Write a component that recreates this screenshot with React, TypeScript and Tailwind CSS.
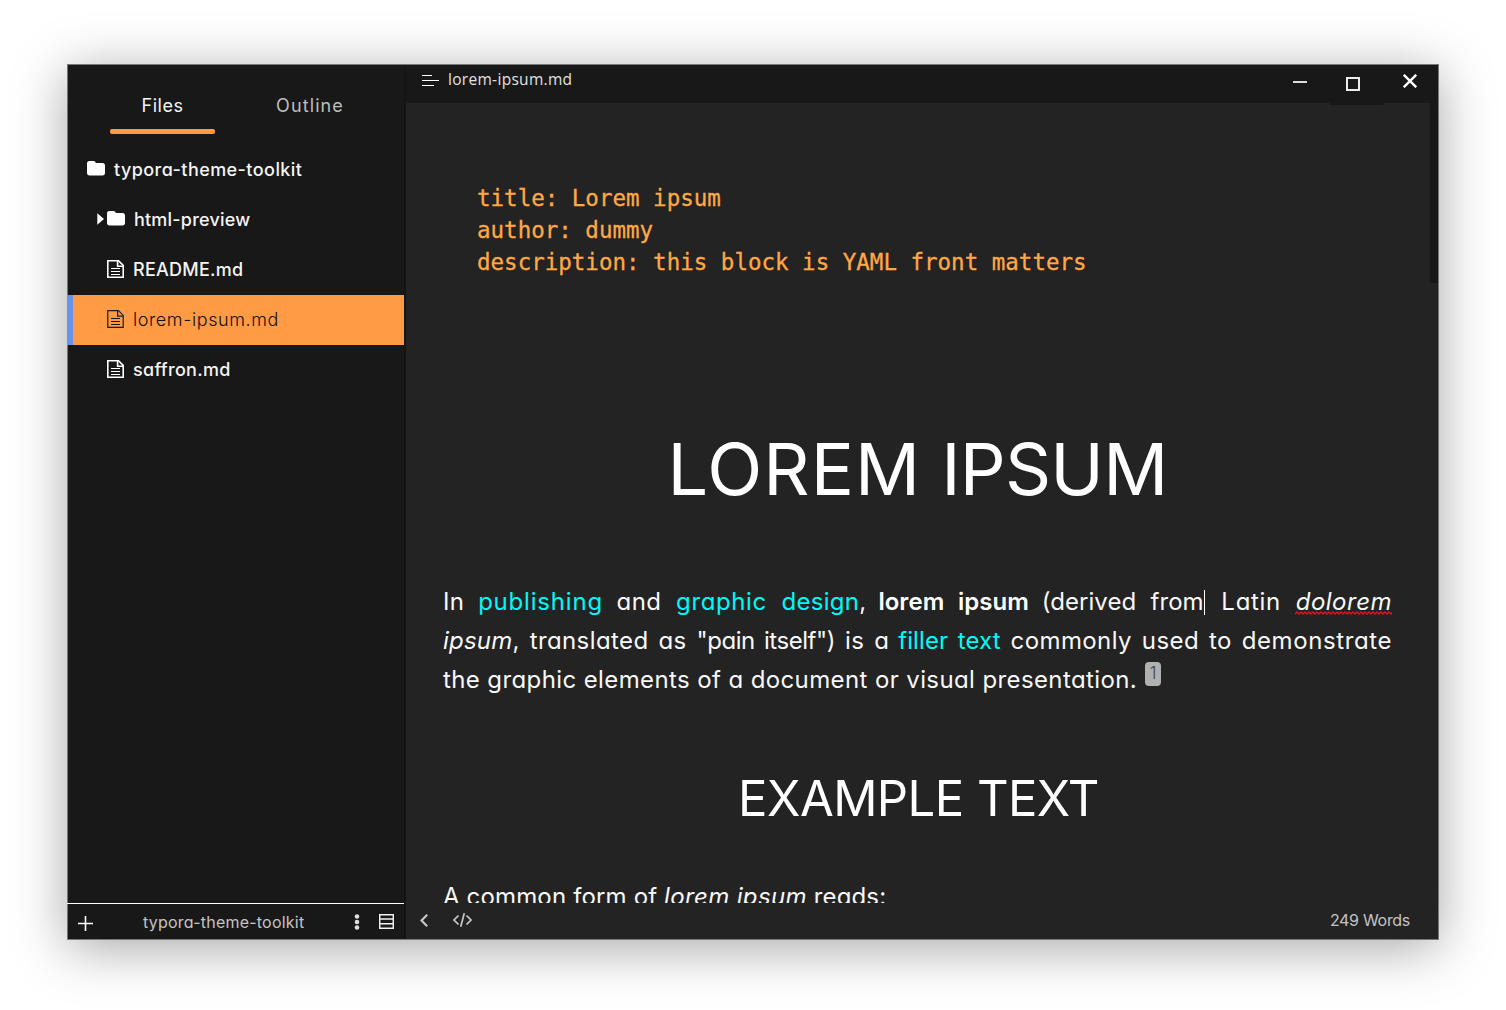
import React from "react";

const Folder = () => (
  <svg className="-mt-[2px] block h-[15px] w-[18px] shrink-0" viewBox="0 0 18 15" fill="#fff">
    <path d="M2.200 0h4.400c1.200 0 2.100.9 2.100 2.100h7c1.300 0 2.300 1 2.300 2.300v7.600c0 1.400-1 2.400-2.300 2.400H2.400C1.100 14.400 0 13.400 0 12V2.200C0 1 1 0 2.200 0z" />
  </svg>
);

const Doc = ({ color, heavy }: { color: string; heavy: boolean }) => (
  <svg className="block h-[18px] w-[17px] shrink-0" viewBox="0 0 17 18" fill="none" stroke={color} strokeWidth={heavy ? 1.6 : 1.2}>
    <path d="M.8.7h10.700l4.700 4.700v11.900H.8z" />
    <path d="M10.600.7v5.500h5.600" />
    <path d="M4 8.500h9M4 11.500h9M4 14.500h9" strokeWidth="1.100" />
  </svg>
);

const Link = ({ children }: { children: React.ReactNode }) => <span className="text-[#00f8f8]">{children}</span>;

function FileRow({ name, spacing, active = false }: { name: string; spacing: string; active?: boolean }) {
  return (
    <div className={active ? "flex h-[50px] w-[337px] -ml-px items-center border-l-[6px] border-[#6c93ea] bg-[#ff9a45] pb-[2px] pl-[34px] font-light text-[#111]" : "flex h-[50px] items-center pb-[2px] pl-[39px] font-medium text-[#f4f4f4]"}>
      <Doc color={active ? "#1c1c1c" : "#fff"} heavy={!active} />
      <span className={"ml-[9px] " + spacing}>{name}</span>
    </div>
  );
}

function Sidebar() {
  return (
    <aside className="flex w-[338px] shrink-0 flex-col border-r-2 border-[#151515] bg-[#181818] text-[18px]">
      <div className="flex h-[80px] shrink-0 items-start pl-[42px]">
        <div className="mt-[25px] flex w-[105px] flex-col items-center text-[#f4f4f4]">
          <span className="h-[39px] leading-[31px] tracking-[0.500px]">Files</span>
          <span className="h-[5px] w-full rounded-[2px] bg-[#ff9a45]" />
        </div>
        <div className="mt-[25px] ml-[42px] w-[106px] text-center leading-[31px] tracking-[1.100px] text-[#bdbdbd]">Outline</div>
      </div>
      <div className="flex h-[50px] items-center pb-[2px] pl-[19px] font-medium text-[#f4f4f4]">
        <Folder />
        <span className="ml-[9px] tracking-[0.440px]">typora-theme-toolkit</span>
      </div>
      <div className="flex h-[50px] items-center pb-[2px] pl-[29px] font-medium text-[#f4f4f4]">
        <svg className="-mt-px mr-[3px] h-[12px] w-[7px]" viewBox="0 0 7 12" fill="#fff"><path d="M.3.300 7 6 .300 11.700z" /></svg>
        <Folder />
        <span className="ml-[9px] tracking-[0.200px]">html-preview</span>
      </div>
      <FileRow name="README.md" spacing="tracking-[0.250px]" />
      <FileRow name="lorem-ipsum.md" spacing="tracking-[0.600px]" active />
      <FileRow name="saffron.md" spacing="tracking-[0.300px]" />
      <div className="mt-auto -ml-px flex h-[36px] w-[337px] items-center border-t border-white text-[16px] text-[#c4c4c4]">
        <svg className="ml-[11px] mt-[4px] h-[15px] w-[15px]" viewBox="0 0 15 15" stroke="#fff" strokeWidth="1.600"><path d="M7.500 0v15M0 7.500h15" /></svg>
        <span className="ml-[50px] w-[162px] whitespace-nowrap tracking-[0.220px]">typora-theme-toolkit</span>
        <svg className="ml-[49px] h-[16px] w-[6px]" viewBox="0 0 6 16" fill="#dedede"><circle cx="3" cy="2.500" r="2.300" /><circle cx="3" cy="8" r="2.300" /><circle cx="3" cy="13.500" r="2.300" /></svg>
        <svg className="ml-[19px] h-[15px] w-[15px]" viewBox="0 0 15 15" fill="none" stroke="#f0f0f0" strokeWidth="1.500"><path d="M.7.700h13.600v13.600H.7zM.7 5h13.600M.7 9.800h13.600" /></svg>
      </div>
    </aside>
  );
}

function TitleBar() {
  return (
    <header className="flex h-[38px] shrink-0 bg-[#181818]">
      <svg className="ml-[16px] mt-[9px] h-[13px] w-[17px]" viewBox="0 0 17 13" stroke="#fff" strokeWidth="1"><path d="M0 1.500h10M0 6.500h17M0 11.500h12" /></svg>
      <span className="ml-[9px] mt-[3px] font-['Open_Sans'] text-[15.500px] font-medium leading-[22px] tracking-[0.300px] text-[#e2e2e2]">lorem-ipsum.md</span>
      <div className="relative ml-auto mr-[21px] flex items-start">
        <span className="mt-[16px] h-[2px] w-[14px] bg-[#dcdcdc]" />
        <span className="absolute left-[37px] top-[38px] h-[2px] w-[53px] bg-[#181818]" />
        <span className="ml-[39px] mt-[12px] h-[14px] w-[14px] border-2 border-[#ececec]" />
        <svg className="ml-[43px] mt-[9px] h-[14px] w-[14px]" viewBox="0 0 14 14" stroke="#fff" strokeWidth="2.400"><path d="M.8.800l12.400 12.400M13.200.800.800 13.200" /></svg>
      </div>
    </header>
  );
}

const line = "whitespace-nowrap [text-align-last:justify]";

export default function App() {
  return (
    <div className="h-[1010px] w-[1506px] overflow-hidden bg-white px-[67px] pt-[64px] font-['Inter',sans-serif] [font-feature-settings:'cv11']">
      <div className="flex h-[876px] w-[1372px] border border-[#777] bg-[#232323] shadow-[0_8px_50px_rgba(0,0,0,0.350)]">
        <Sidebar />
        <div className="flex min-w-0 flex-1 flex-col">
          <TitleBar />
          <main className="relative h-[800px] shrink-0 overflow-hidden px-[37px] text-[24px] leading-[39px] text-[#f8f8f8]">
            <span className="absolute right-0 top-0 h-[180px] w-[8px] bg-[#181818]" />
            <pre className="ml-[34px] mt-[79px] font-['DejaVu_Sans_Mono',monospace] text-[22.500px] leading-[32px] text-[#ffa845] [-webkit-text-stroke:0.300px_#ffa845]">{"title: Lorem ipsum\nauthor: dummy\ndescription: this block is YAML front matters"}</pre>
            <h1 className="mt-[141px] h-[100px] w-[949px] text-center text-[72px] leading-[100px] text-white">
              <span className="tracking-[1px]">LOREM</span> <span className="tracking-[-0.800px]">IPSUM</span>
            </h1>
            <div className="mt-[63px] w-[949px] tracking-[0.400px]">
              <p className={line}>
                In <Link><span className="-ml-px tracking-[0.800px]">publishing</span></Link> <span className="-ml-px">and</span> <Link><span className="tracking-[0.600px]">graphic</span> <span className="tracking-[0.300px]">design</span></Link>,{" "}
                <b className="-ml-[3px] font-semibold tracking-[0.050px] text-white">lorem ipsum</b> <span className="-ml-[2px] tracking-[0.050px]">(derived from</span>
                <span className="mr-[2px] inline-block h-[25px] w-px bg-white align-[-5px]" /> <span className="tracking-[0.700px]">Latin</span>{" "}
                <i className="relative tracking-[0.500px]">
                  dolorem
                  <svg className="absolute -left-[1px] top-[24px] h-[4px] w-[97px]" viewBox="0 0 97 4" fill="none" stroke="#e81123" strokeWidth="1.300">
                    <path d={"M0 3" + Array.from({ length: 25 }, () => "l2-2l2 2").join("")} />
                  </svg>
                </i>
              </p>
              <p className={line}>
                <i className="tracking-[0.200px]">ipsum</i>, translated as <span className="tracking-[-0.450px]">"pain itself")</span> is a <Link><span className="-ml-px tracking-[0.100px]">filler text</span></Link> commonly used to <span className="tracking-[0.600px]">demonstrate</span>
              </p>
              <p className="whitespace-nowrap tracking-[0.390px]">
                the graphic elements of a document or visual presentation.
                <sup className="relative -top-[9px] ml-[8px] inline-block h-[24px] w-[16px] rounded-[4px] bg-[#b0b0b0] text-center align-baseline text-[17px] font-light leading-[22px] tracking-normal text-[#444]">1</sup>
              </p>
            </div>
            <h2 className="mt-[65px] h-[70px] w-[951px] text-center text-[49px] leading-[70px] tracking-[-0.550px] text-white">EXAMPLE TEXT</h2>
            <p className="mt-[43px] tracking-[0.150px]">A common form of <i className="tracking-[0.350px]">lorem ipsum</i> reads:</p>
          </main>
          <footer className="flex h-[36px] shrink-0 items-center pb-[2px] text-[16px] text-[#c4c4c4]">
            <svg className="ml-[14px] h-[13px] w-[8px]" viewBox="0 0 8 13" fill="none" stroke="#c8c8c8" strokeWidth="2.200"><path d="M7.200.800 1.500 6.500l5.700 5.700" /></svg>
            <svg className="ml-[25px] h-[14px] w-[19px]" viewBox="0 0 19 14" fill="none" stroke="#c8c8c8" strokeWidth="1.700"><path d="M5.500 2.500 1 7l4.500 4.500M13.500 2.500 18 7l-4.500 4.500M11.300.300 7.700 13.700" /></svg>
            <span className="ml-auto mr-[28px] tracking-[-0.300px]">249 Words</span>
          </footer>
        </div>
      </div>
    </div>
  );
}
